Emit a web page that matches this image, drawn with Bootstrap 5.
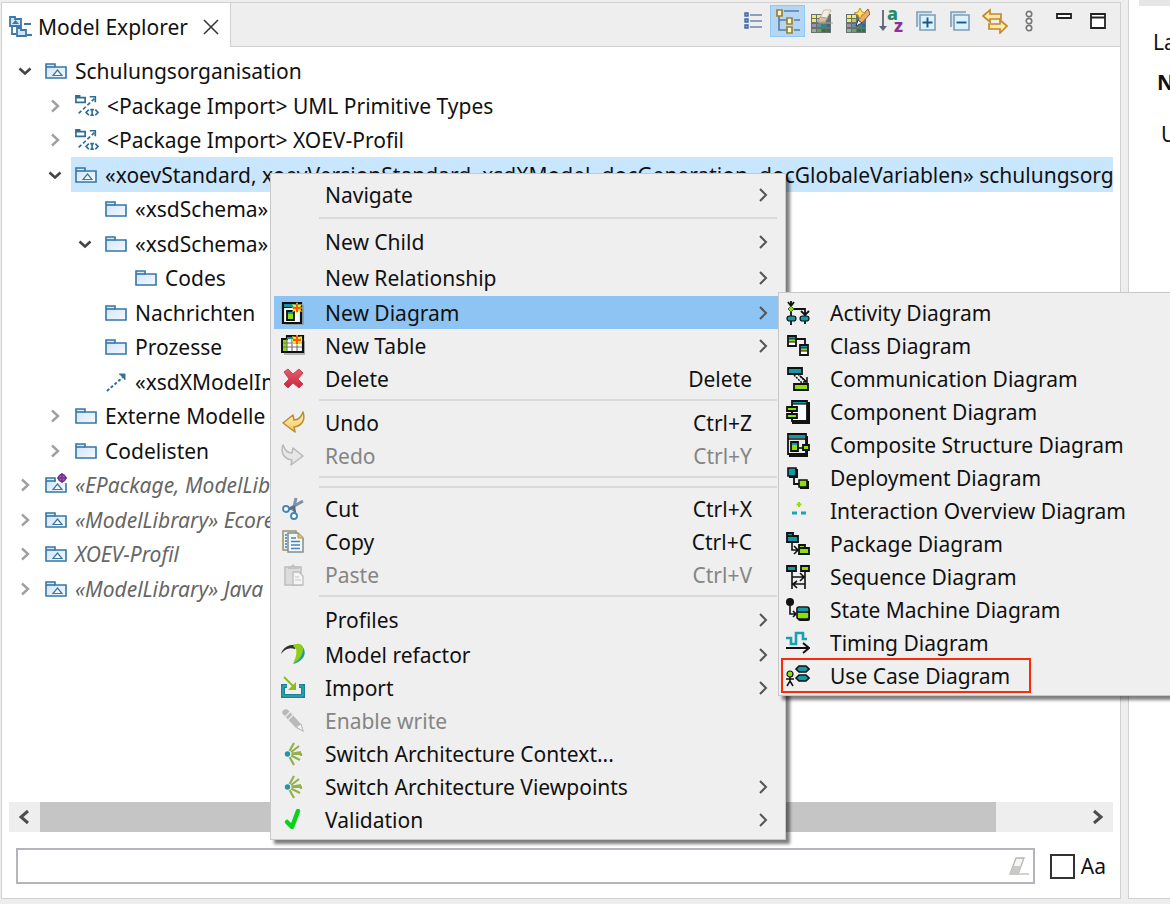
<!DOCTYPE html>
<html lang="en">
<head>
<meta charset="utf-8">
<meta name="viewport" content="width=device-width, initial-scale=1">
<title>Model Explorer</title>
<link href="https://cdn.jsdelivr.net/npm/bootstrap@5.3.0/dist/css/bootstrap.min.css" rel="stylesheet">
<style>
  body { background: #eee; color: #111; font-family: "Noto Sans", "Open Sans", sans-serif; font-size: 21px; line-height: 32px; }
  svg { display: block; flex: none; }
  .workbench { height: 100vh; min-height: 850px; padding: 2px 0 5px 1px; }
  .view-pane { background: #fff; border: 1px solid #d0d0d0; min-width: 0; }
  .side-pane { width: 42px; margin: -2px 0 0 7px; background: #fff; border: 1px solid #d0d0d0; border-width: 0 0 1px 1px; white-space: nowrap; }
  .side-strip { height: 6px; margin-left: 10px; background: #e6e6e6; }
  .view-head { height: 44px; background: #eee; }
  .view-tab { background: #fff; border-right: 1px solid #d0d0d0; padding: 3px 10px 0 6px; gap: 6px; }
  .view-tools { border-bottom: 1px solid #d0d0d0; padding: 2px 5px 0 0; }
  .tool { width: 34px; height: 32px; padding: 0; border: 1px solid transparent; border-radius: 0; background: none; }
  .tool:nth-child(even) { width: 35px; }
  .tool.active { background: #b5d6f2; border-color: #90c8f6; }
  .plain { border: 0; padding: 0; background: none; }
  .tree { margin: 7px 7px 0 13px; list-style: none; padding: 0; white-space: nowrap; }
  .tree li { height: 34px; }
  .tree li:nth-child(even) { height: 35px; }
  .twisty { width: 20px; flex: none; }
  .node { margin-left: 6px; padding-left: 4px; gap: 8px; }
  .node.picked { background: #c9e6ff; }
  .lv1 { padding-left: 30px; } .lv2 { padding-left: 60px; } .lv3 { padding-left: 90px; }
  .lib { color: #666; font-style: italic; }
  .hbar { margin: 0 7px 16px; height: 30px; background: #eee; }
  .hbar button { width: 31px; }
  .thumb { background: #c5c5c5; }
  .filter { margin: 0 14px 14px; gap: 15px; }
  .filter-box { height: 36px; border: 2px solid #b4b4bb; background: #fff; padding-right: 4px; }
  .filter-box input { border: 0; outline: 0; background: none; }
  .case-label { gap: 6px; }
  .case-label input { appearance: none; width: 25px; height: 25px; border: 2px solid #333; background: #fff; margin: 0; }
  .ctx { --bs-dropdown-bg: #efefef; --bs-dropdown-border-color: #c8c8c8; --bs-dropdown-border-radius: 0; --bs-dropdown-font-size: 21px;
    padding: 3px; color: #111; box-shadow: 4px 4px 3px rgba(0,0,0,.5); }
  .ctx-main { left: 270px; top: 173px; width: 516px; }
  .ctx-sub { left: calc(100% - 4px); top: -4px; width: 420px; z-index: 1; }
  .ctx .dropdown-item { display: flex; align-items: center; gap: 20px; height: 33px; padding: 0 14px 0 7px; color: #111; }
  .ctx .dropdown-item.tall { height: 36px; }
  .ctx .dropdown-item.off { color: #858585; }
  .ctx .dropdown-item.on { background: #8dc4f3; width: calc(100% - 3px); padding-right: 11px; }
  .ctx .ctx-sub .dropdown-item { padding-left: 4px; }
  .ctx .dropdown-item.marked { width: 248px; outline: 2px solid #fb2a0a; outline-offset: -1px; }
  .ico { width: 24px; height: 24px; flex: none; }
  .keys { margin: 0 16px 0 auto; }
  .more { margin-left: auto; }
  .rule { height: 11px; margin: 0 5px 0 45px; padding-top: 4px; }
  .rule::before { content: ""; display: block; border-top: 2px solid #dadada; }
  .rule + .rule { height: 9px; padding-top: 3px; }
</style>
</head>
<body class="overflow-hidden">

<svg width="0" height="0" class="position-absolute" aria-hidden="true">
  <defs>
    <linearGradient id="blue" x2="1" y2="1"><stop stop-color="#cfe3f8"/><stop offset="1" stop-color="#f4f9ff"/></linearGradient>
    <linearGradient id="gold" x2="0" y2="1"><stop stop-color="#fff3c8"/><stop offset="1" stop-color="#f3c75b"/></linearGradient>
    <linearGradient id="red" x2="0" y2="1"><stop stop-color="#e0606c"/><stop offset="1" stop-color="#cf2440"/></linearGradient>
    <symbol id="folder" viewBox="0 0 22 16"><path d="M1 15V1h9v3h11v11z" fill="url(#blue)" stroke="#3577a5" stroke-width="1.6"/><path d="M1 4h9" stroke="#3577a5" stroke-width="1.6"/></symbol>
    <symbol id="model" viewBox="0 0 22 16"><use href="#folder"/><path d="M8 12.500 12.500 7l4.500 5.500z" fill="#fff" stroke="#3577a5" stroke-width="1.200"/></symbol>
    <symbol id="import-pkg" viewBox="0 0 26 24"><g fill="none" stroke="#2d6d98" stroke-width="1.800"><path d="M1 8V1h4v2h6v5zM1 3h5"/><path d="M4 20 21 4" stroke-dasharray="4 2.500"/><path d="M16 2h6v6M15 16l-3 3 3 3M22 16l3 3-3 3M16.500 16h4M16.500 22h4M18.500 16v6"/></g></symbol>
    <symbol id="dash" viewBox="0 0 22 20"><path d="M2 19 18 5" stroke="#34729a" stroke-width="2" stroke-dasharray="3 2"/><path d="M14 2h6v6" fill="#34729a" stroke="#34729a"/></symbol>
    <symbol id="open" viewBox="0 0 20 20"><path d="m4.500 7.500 5.500 5 5.500-5" fill="none" stroke="#444" stroke-width="2.600"/></symbol>
    <symbol id="shut" viewBox="0 0 20 20"><path d="m7 4.500 6 5.500-6 5.500" fill="none" stroke="#a0a0a0" stroke-width="2.400"/></symbol>
    <symbol id="chev" viewBox="0 0 10 14"><path d="m2 1 6 6-6 6" fill="none" stroke="#555" stroke-width="2"/></symbol>
    <symbol id="spark" viewBox="0 0 12 12"><path d="m6 0 1.500 3L11 2 9.500 5l2.500 1-2.500 1L11 10 7.500 9 6 12 4.500 9 1 10l1.500-3L0 6l2.500-1L1 2l3.500 1z" fill="#ffe11a"/><path d="M6 2v8M2 6h8" stroke="#f05a14" stroke-width="2"/></symbol>
    <symbol id="fan" viewBox="0 0 24 24"><path d="M8 10 13 1M9 11l9-7M9 12l11-2M9 12h11v2M9 13l10 5M8 14l5 9" fill="none" stroke="#93b04e" stroke-width="2.200"/><circle cx="7" cy="12" r="3.600" fill="#efefef"/><circle cx="6.500" cy="12" r="2.700" fill="#2295a8"/></symbol>
    <symbol id="palette" viewBox="0 0 26 26"><path d="M2 6h20v19H2z" fill="#66726d"/><path d="M3 7h4v3H3zM3 11h4v3H3zM8 7h4v3H8z" fill="#f1eb69"/><path d="M8 11h4v3H8z" fill="#bbcd62"/><path d="M3 16h4v3H3z" fill="#9f91ac"/><path d="M3 21h4v3H3z" fill="#9cab9d"/><path d="M8 16h4v3H8z" fill="#658fa3"/><path d="M13 16h4v3h-4z" fill="#32877e"/><path d="M18 16h3v3h-3z" fill="#236da1"/><path d="M8 21h4v3H8z" fill="#67a65a"/><path d="M13 21h4v3h-4zM18 21h3v3h-3z" fill="#247b3d"/></symbol>
  </defs>
</svg>

<main class="workbench d-flex position-relative">
  <section class="view-pane flex-grow-1 d-flex flex-column" aria-label="Model Explorer">
    <header class="view-head d-flex">
      <div class="view-tab d-flex align-items-center">
        <svg width="24" height="22" viewBox="0 0 24 22" fill="none" stroke="#3e78a8" stroke-width="1.800"><path d="M2 10V1h5v2h6v7z" fill="#cfe4f6"/><path d="m4 8 3.500-4L11 8z" fill="#3e78a8" stroke="none"/><path d="M4 10v8h4M16 8h7M19 19h5" /><path d="M9 20v-8h4v2h5v6z" fill="#cfe4f6"/></svg>
        <span>Model Explorer</span>
        <button class="plain ms-2" type="button" aria-label="Close"><svg width="18" height="18" viewBox="0 0 18 18"><path d="m2 2 14 14M16 2 2 16" stroke="#333" stroke-width="1.500"/></svg></button>
      </div>
      <div class="view-tools d-flex flex-grow-1 justify-content-end">
        <button class="tool d-flex align-items-center justify-content-center" type="button" aria-label="List"><svg width="18" height="18" viewBox="0 0 18 18"><path d="M6 3h12M6 9h12M6 15h12" stroke="#6b86a9" stroke-width="1.600"/><path d="M1 1h3v3H1zM1 7h3v3H1zM1 13h3v3H1z" fill="#8bb0d9" stroke="#4166a0" stroke-width="1.400"/></svg></button>
        <button class="tool active d-flex align-items-center justify-content-center" type="button" aria-label="Tree"><svg width="26" height="26" viewBox="0 0 26 26"><path d="M9 3h15M19 12h6M19 22h6M4 8v14h8M4 12h8" fill="none" stroke="#557ba5" stroke-width="1.600"/><path d="M2 2h5v6H2zM12 10h5v6h-5zM12 19h5v6h-5z" fill="#fff8cb" stroke="#92823b" stroke-width="1.700"/></svg></button>
        <button class="tool d-flex align-items-center justify-content-center" type="button" aria-label="Erase colours"><svg width="26" height="26" viewBox="0 0 26 26"><use href="#palette"/><path d="m9 14 6-12h7l-6 12z" fill="#f3eee6" stroke="#c9b9aa"/><path d="M9 14h7l2-4-7-1zM10 15h14" fill="#d3bea9" stroke="#b4a18e"/></svg></button>
        <button class="tool d-flex align-items-center justify-content-center" type="button" aria-label="Edit colours"><svg width="26" height="26" viewBox="0 0 26 26"><use href="#palette"/><path d="m12 18 2-6L24 1l2 5-9 10z" fill="#e7ad73" stroke="#8f542a"/><path d="m12 18 2-6 4 3z" fill="#fff" stroke="#233e76"/><path d="m16 0 2 4 4 1-4 2-2 4-2-4-4-2 4-1z" fill="#ffe369" stroke="#c89422"/></svg></button>
        <button class="tool d-flex align-items-center justify-content-center" type="button" aria-label="Sort"><svg width="26" height="26" viewBox="0 0 26 26"><path d="M5 2v17" stroke="#586778" stroke-width="1.800"/><path d="M1 18h8l-4 5z" fill="#586778"/><text x="9" y="12" font-family="Noto Sans, sans-serif" font-weight="800" font-size="18" fill="#278a68">a</text><text x="16" y="24" font-family="Noto Sans, sans-serif" font-weight="800" font-size="18" fill="#8a3296">z</text></svg></button>
        <button class="tool d-flex align-items-center justify-content-center" type="button" aria-label="Expand all"><svg width="20" height="20" viewBox="0 0 20 20"><path d="M1 16V1h15" fill="#d4e5ef" stroke="#7d9db7" stroke-width="1.600"/><path d="M4 4h15v15H4z" fill="#ddf1fb" stroke="#7d9db7" stroke-width="1.600"/><path d="M6.500 11.500h10M11.500 6.500v10" stroke="#155a8c" stroke-width="1.900"/></svg></button>
        <button class="tool d-flex align-items-center justify-content-center" type="button" aria-label="Collapse all"><svg width="20" height="20" viewBox="0 0 20 20"><path d="M1 16V1h15" fill="#d4e5ef" stroke="#7d9db7" stroke-width="1.600"/><path d="M4 4h15v15H4z" fill="#ddf1fb" stroke="#7d9db7" stroke-width="1.600"/><path d="M6.500 11.500h10" stroke="#155a8c" stroke-width="1.900"/></svg></button>
        <button class="tool d-flex align-items-center justify-content-center" type="button" aria-label="Link with editor"><svg width="26" height="26" viewBox="0 0 26 26" fill="#ffeaa8" stroke="#c4882c" stroke-width="1.700"><path d="m1 8 7-6v4h11v5H8v3z"/><path d="m25 18-7-6v4H7v5h11v4z"/></svg></button>
        <button class="tool d-flex align-items-center justify-content-center" type="button" aria-label="View menu"><svg width="10" height="24" viewBox="0 0 10 24" fill="#fff" stroke="#777" stroke-width="1.700"><circle cx="5" cy="5" r="2.700"/><circle cx="5" cy="12" r="2.700"/><circle cx="5" cy="19" r="2.700"/></svg></button>
        <button class="tool d-flex align-items-center justify-content-center" type="button" aria-label="Minimize"><svg width="16" height="16" viewBox="0 0 16 16"><path d="M1 1h14v4H1z" fill="#fff" stroke="#222" stroke-width="1.800"/></svg></button>
        <button class="tool d-flex align-items-center justify-content-center" type="button" aria-label="Maximize"><svg width="16" height="16" viewBox="0 0 16 16"><path d="M1 1h14v14H1zM1 4.500h14" fill="#fff" stroke="#222" stroke-width="1.800"/></svg></button>
      </div>
    </header>

    <ul class="tree flex-grow-1 overflow-hidden">
      <li class="d-flex align-items-center"><svg class="twisty" height="20"><use href="#open"/></svg><div class="node d-flex align-items-center flex-grow-1"><svg width="22" height="16"><use href="#model"/></svg>Schulungsorganisation</div></li>
      <li class="d-flex align-items-center lv1"><svg class="twisty" height="20"><use href="#shut"/></svg><div class="node d-flex align-items-center flex-grow-1"><svg width="24" height="24"><use href="#import-pkg"/></svg>&lt;Package Import&gt; UML Primitive Types</div></li>
      <li class="d-flex align-items-center lv1"><svg class="twisty" height="20"><use href="#shut"/></svg><div class="node d-flex align-items-center flex-grow-1"><svg width="24" height="24"><use href="#import-pkg"/></svg>&lt;Package Import&gt; XOEV-Profil</div></li>
      <li class="d-flex lv1"><svg class="twisty align-self-center" height="20"><use href="#open"/></svg><div class="node picked d-flex align-items-center flex-grow-1"><svg width="22" height="16"><use href="#model"/></svg>«xoevStandard, xoevVersionStandard, xsdXModel, docGeneration, docGlobaleVariablen» schulungsorganisation</div></li>
      <li class="d-flex align-items-center lv2"><span class="twisty"></span><div class="node d-flex align-items-center flex-grow-1"><svg width="22" height="16"><use href="#folder"/></svg>«xsdSchema»</div></li>
      <li class="d-flex align-items-center lv2"><svg class="twisty" height="20"><use href="#open"/></svg><div class="node d-flex align-items-center flex-grow-1"><svg width="22" height="16"><use href="#folder"/></svg>«xsdSchema»</div></li>
      <li class="d-flex align-items-center lv3"><span class="twisty"></span><div class="node d-flex align-items-center flex-grow-1"><svg width="22" height="16"><use href="#folder"/></svg>Codes</div></li>
      <li class="d-flex align-items-center lv2"><span class="twisty"></span><div class="node d-flex align-items-center flex-grow-1"><svg width="22" height="16"><use href="#folder"/></svg>Nachrichten</div></li>
      <li class="d-flex align-items-center lv2"><span class="twisty"></span><div class="node d-flex align-items-center flex-grow-1"><svg width="22" height="16"><use href="#folder"/></svg>Prozesse</div></li>
      <li class="d-flex align-items-center lv2"><span class="twisty"></span><div class="node d-flex align-items-center flex-grow-1"><svg width="22" height="20"><use href="#dash"/></svg>«xsdXModelImport»</div></li>
      <li class="d-flex align-items-center lv1"><svg class="twisty" height="20"><use href="#shut"/></svg><div class="node d-flex align-items-center flex-grow-1"><svg width="22" height="16"><use href="#folder"/></svg>Externe Modelle</div></li>
      <li class="d-flex align-items-center lv1"><svg class="twisty" height="20"><use href="#shut"/></svg><div class="node d-flex align-items-center flex-grow-1"><svg width="22" height="16"><use href="#folder"/></svg>Codelisten</div></li>
      <li class="d-flex align-items-center"><svg class="twisty" height="20"><use href="#shut"/></svg><div class="node lib d-flex align-items-center flex-grow-1"><svg width="22" height="24" viewBox="0 0 22 24"><use href="#model" y="4" width="22" height="16"/><path d="M11 0h11v10H11z" fill="#fff"/><circle cx="17" cy="5" r="3.500" fill="#a868b0" stroke="#70308a" stroke-width="1.500"/><path d="M17 0v10M12 5h10" stroke="#70308a" stroke-width="1.500"/></svg>«EPackage, ModelLibrary»</div></li>
      <li class="d-flex align-items-center"><svg class="twisty" height="20"><use href="#shut"/></svg><div class="node lib d-flex align-items-center flex-grow-1"><svg width="22" height="16"><use href="#model"/></svg>«ModelLibrary» Ecore</div></li>
      <li class="d-flex align-items-center"><svg class="twisty" height="20"><use href="#shut"/></svg><div class="node lib d-flex align-items-center flex-grow-1"><svg width="22" height="16"><use href="#model"/></svg>XOEV-Profil</div></li>
      <li class="d-flex align-items-center"><svg class="twisty" height="20"><use href="#shut"/></svg><div class="node lib d-flex align-items-center flex-grow-1"><svg width="22" height="16"><use href="#model"/></svg>«ModelLibrary» Java</div></li>
    </ul>

    <div class="hbar d-flex">
      <button class="plain d-flex flex-shrink-0 align-items-center justify-content-center" type="button" aria-label="Scroll left"><svg width="12" height="16" viewBox="0 0 12 16"><path d="M9 2 2 8l7 6" fill="none" stroke="#4d4d4d" stroke-width="3"/></svg></button>
      <div class="flex-grow-1 d-flex"><div class="thumb" style="width:91.7%"></div></div>
      <button class="plain d-flex flex-shrink-0 align-items-center justify-content-center" type="button" aria-label="Scroll right"><svg width="12" height="16" viewBox="0 0 12 16"><path d="m2 2 7 6-7 6" fill="none" stroke="#4d4d4d" stroke-width="3"/></svg></button>
    </div>

    <div class="filter d-flex align-items-center">
      <div class="filter-box d-flex align-items-center flex-grow-1">
        <input type="text" class="flex-grow-1" aria-label="Filter">
        <button class="plain" type="button" aria-label="Clear"><svg width="20" height="20" viewBox="0 0 20 20"><path d="m1 18 6-16h8L9 18z" fill="#f6f6f4" stroke="#b5b5b0" stroke-width="1.300"/><path d="m1 18 3-8h8L9 18z" fill="#c9c9c5"/><path d="M9 18h11" stroke="#c5c5c0" stroke-width="1.500"/></svg></button>
      </div>
      <label class="case-label d-flex align-items-center"><input type="checkbox">Aa</label>
    </div>
  </section>

  <section class="side-pane overflow-hidden flex-shrink-0" aria-label="Properties">
    <div class="side-strip"></div>
    <div class="mt-3 ps-4 pt-1">Label</div>
    <div class="mt-2 fw-bold ms-1 ps-4">Name</div>
    <div class="mt-3 pt-1 ms-2 ps-4">URI</div>
  </section>

  <ul class="dropdown-menu show ctx ctx-main">
    <li><button class="dropdown-item tall" type="button"><span class="ico"></span>Navigate<svg class="more" width="10" height="14"><use href="#chev"/></svg></button></li>
    <li class="rule"></li>
    <li><button class="dropdown-item tall" type="button"><span class="ico"></span>New Child<svg class="more" width="10" height="14"><use href="#chev"/></svg></button></li>
    <li><button class="dropdown-item tall" type="button"><span class="ico"></span>New Relationship<svg class="more" width="10" height="14"><use href="#chev"/></svg></button></li>
    <li class="position-relative">
      <button class="dropdown-item on" type="button"><svg class="ico" viewBox="0 0 24 24"><path d="M5 4h18v20H5z" fill="#8a8a80" opacity=".6"/><path d="M2 2h18v20H2z" fill="#fff" stroke="#111" stroke-width="2.200"/><path d="M3 3h16v3H3z" fill="#16929f"/><path d="M3 6.500h16" stroke="#111"/><path d="M6 10h7v9H6z" fill="#8fdd0a" stroke="#111" stroke-width="1.800"/><path d="M7 11h5v2H7z" fill="#16929f"/><use href="#spark" x="10" y="1" width="12" height="12"/></svg>New Diagram<svg class="more" width="10" height="14"><use href="#chev"/></svg></button>
      <ul class="dropdown-menu show ctx ctx-sub">
        <li><button class="dropdown-item" type="button"><svg class="ico" viewBox="0 0 24 24"><g fill="none" stroke="#111" stroke-width="1.800"><path d="M5 0v24M2 1l3 4 3-4M5 8h14v15M15 10l4 4 4-4"/></g><path d="m5 5 3 3-3 3-3-3z" fill="#8fdd0a" stroke="#456b08"/><rect x="1" y="15" width="9" height="5" rx="2.500" fill="#129aa8" stroke="#111" stroke-width="1.200"/><rect x="14" y="15" width="9" height="5" rx="2.500" fill="#129aa8" stroke="#111" stroke-width="1.200"/></svg>Activity Diagram</button></li>
        <li><button class="dropdown-item" type="button"><svg class="ico" viewBox="0 0 24 24"><path d="M10 5h9v6" fill="none" stroke="#111" stroke-width="1.800"/><path d="M2 2h8v10H2zM14 11h8v10h-8z" fill="#fff" stroke="#111" stroke-width="1.800"/><path d="M3 3h6v2H3zM15 12h6v2h-6z" fill="#129aa8"/><path d="M3 5.500h6V8H3zM15 14.500h6V17h-6z" fill="#8fdd0a"/><path d="M2 5h8M2 8h8M14 14h8M14 17h8" stroke="#111"/></svg>Class Diagram</button></li>
        <li><button class="dropdown-item" type="button"><svg class="ico" viewBox="0 0 24 24"><path d="M2 1h14v6H2z" fill="#129aa8" stroke="#111" stroke-width="1.800"/><path d="m8 8 8 8M12 7l8 8" stroke="#111" stroke-width="1.500" stroke-dasharray="2 1"/><path d="m14 9 7 6v-5M21 15h-4" fill="none" stroke="#111" stroke-width="1.500"/><path d="M8 17h14v6H8z" fill="#8fdd0a" stroke="#111" stroke-width="1.800"/></svg>Communication Diagram</button></li>
        <li><button class="dropdown-item" type="button"><svg class="ico" viewBox="0 0 24 24"><path d="M6 2h18v22H6z" fill="#111"/><path d="M6 1h15v20H6z" fill="#fff" stroke="#111" stroke-width="1.800"/><path d="M7 2h13v2H7z" fill="#129aa8"/><path d="M6 4h15" stroke="#111" stroke-width="1.200"/><path d="M1 7h10v4H1zM1 14h10v4H1z" fill="#8fdd0a" stroke="#111" stroke-width="1.800"/></svg>Component Diagram</button></li>
        <li><button class="dropdown-item" type="button"><svg class="ico" viewBox="0 0 24 24"><path d="M3 3h19v21H3z" fill="#111"/><path d="M2 1h18v20H2z" fill="#e9ece9" stroke="#111" stroke-width="1.800"/><path d="M3 2h16v3H3z" fill="#129aa8"/><path d="M2 6h18" stroke="#111" stroke-width="1.500"/><path d="M5 9h7v9H5zM17 12h6v5h-6z" fill="#8fdd0a" stroke="#111" stroke-width="1.800"/><path d="M12 15h5" stroke="#111" stroke-width="1.600"/><path d="M6 10h5v2H6z" fill="#129aa8"/></svg>Composite Structure Diagram</button></li>
        <li><button class="dropdown-item" type="button"><svg class="ico" viewBox="0 0 24 24"><path d="M3 3h9v9H3zM14 15h9v8h-9z" fill="#111"/><path d="M2 2h8v8H2z" fill="#129aa8" stroke="#111" stroke-width="1.600"/><path d="M8 11v7h6" fill="none" stroke="#111" stroke-width="1.800"/><path d="M13 14h8v7h-8z" fill="#8fdd0a" stroke="#111" stroke-width="1.600"/></svg>Deployment Diagram</button></li>
        <li><button class="dropdown-item" type="button"><svg class="ico" viewBox="0 0 24 24"><path d="M13 3v5M10.500 5.500h5" stroke="#8fdd0a" stroke-width="2"/><path d="M6 14h5M15 14h5" stroke="#17a7b2" stroke-width="3"/></svg>Interaction Overview Diagram</button></li>
        <li><button class="dropdown-item" type="button"><svg class="ico" viewBox="0 0 24 24"><path d="M1 10V1h6v3h5v6zM1 4h6" fill="#129aa8" stroke="#111" stroke-width="1.800"/><path d="M6 11v7h6M8 14l4 4-4 4" fill="none" stroke="#111" stroke-width="1.600"/><path d="M13 22v-9h6v3h4v6zM13 16h6" fill="#8fdd0a" stroke="#111" stroke-width="1.800"/></svg>Package Diagram</button></li>
        <li><button class="dropdown-item" type="button"><svg class="ico" viewBox="0 0 24 24"><path d="M6 5v19M19 5v19M6 12h12M14 8l4 4-4 4M19 19H7M11 16l-4 3 4 4" fill="none" stroke="#111" stroke-width="1.600"/><path d="M1 1h9v5H1z" fill="#129aa8" stroke="#111" stroke-width="1.800"/><path d="M15 1h8v5h-8z" fill="#8fdd0a" stroke="#111" stroke-width="1.800"/></svg>Sequence Diagram</button></li>
        <li><button class="dropdown-item" type="button"><svg class="ico" viewBox="0 0 24 24"><circle cx="4" cy="4" r="4" fill="#111"/><path d="M4 6v10h6M7 13l3 3-3 3" fill="none" stroke="#111" stroke-width="1.600"/><rect x="12" y="10" width="12" height="13" rx="2" fill="#111"/><rect x="11" y="9" width="12" height="12" rx="2" fill="#8fdd0a" stroke="#111" stroke-width="1.600"/><path d="M12 10h10v3H12z" fill="#129aa8"/><path d="M11 14h12" stroke="#111" stroke-width="1.600"/></svg>State Machine Diagram</button></li>
        <li><button class="dropdown-item" type="button"><svg class="ico" viewBox="0 0 24 24"><path d="M0 7h5v6h5V2h7v6h4" fill="none" stroke="#17a2ae" stroke-width="2.600"/><path d="M0 17h23M17 12l6 5-6 5" fill="none" stroke="#111" stroke-width="1.900"/></svg>Timing Diagram</button></li>
        <li><button class="dropdown-item marked" type="button"><svg class="ico" viewBox="0 0 24 24"><path d="m10 5 3-3h7l3 3-3 3h-7zM10 14l3-3h7l3 3-3 3h-7z" fill="#129aa8" stroke="#111" stroke-width="1.600"/><circle cx="4" cy="10" r="3" fill="#8fdd0a" stroke="#111" stroke-width="1.200"/><path d="M4 13v5M0 15h8M4 17l-3 5M4 17l3 5" stroke="#111" stroke-width="1.500"/></svg>Use Case Diagram</button></li>
      </ul>
    </li>
    <li><button class="dropdown-item" type="button"><svg class="ico" viewBox="0 0 24 24"><path d="M3 7h21v14H3z" fill="#888" opacity=".6"/><path d="M1 5h5V2h16v16H1z" fill="#fff" stroke="#111" stroke-width="2.200"/><path d="M2 6h4v11H2z" fill="#8fdd0a"/><path d="M6 3h14v2H6z" fill="#16929f"/><path d="M6 5v12M11 5v12M16 5v12M2 9h19M2 13h19" stroke="#777" stroke-width="1.200"/><use href="#spark" x="10" y="0" width="12" height="12"/></svg>New Table<svg class="more" width="10" height="14"><use href="#chev"/></svg></button></li>
    <li><button class="dropdown-item" type="button"><svg class="ico" viewBox="0 0 24 24"><path d="m3 5 4-3 5 5 6-5 4 4-5 6 5 5-4 4-6-5-5 5-4-4 5-5z" fill="url(#red)" stroke="#d04355" stroke-linejoin="round"/></svg>Delete<span class="keys">Delete</span></button></li>
    <li class="rule"></li>
    <li><button class="dropdown-item" type="button"><svg class="ico" viewBox="0 0 24 24"><path d="M22 1c3 9-2 14-9 15l1 5L2 12l10-8 1 5c4 0 7-2 9-8z" fill="url(#gold)" stroke="#bd8b2e" stroke-width="1.500" stroke-linejoin="round"/></svg>Undo<span class="keys">Ctrl+Z</span></button></li>
    <li><button class="dropdown-item off" type="button"><svg class="ico" viewBox="0 0 24 24"><path d="M2 1c-3 9 2 14 9 15l-1 5 12-9-10-8-1 5C7 9 4 7 2 1z" fill="#e6e6e6" stroke="#b9b9b9" stroke-width="1.500" stroke-linejoin="round"/></svg>Redo<span class="keys">Ctrl+Y</span></button></li>
    <li class="rule"></li>
    <li class="rule"></li>
    <li><button class="dropdown-item" type="button"><svg class="ico" viewBox="0 0 24 24"><path d="m8 12 14-8M12 14l3-13" stroke="#7f91a6" stroke-width="3"/><path d="m8 12 5-2 1 6" fill="none" stroke="#596b82" stroke-width="2.400"/><circle cx="5" cy="12" r="3" fill="#fff" stroke="#4586b8" stroke-width="1.900"/><circle cx="13" cy="19" r="3" fill="#fff" stroke="#4586b8" stroke-width="1.900"/></svg>Cut<span class="keys">Ctrl+X</span></button></li>
    <li><button class="dropdown-item" type="button"><svg class="ico" viewBox="0 0 24 24"><path d="M2 1h13v19H2z" fill="#e9eff0" stroke="#9b936a" stroke-width="1.500"/><path d="M4 5h2M4 8h2M4 11h2M4 14h2M4 17h2" stroke="#457cab" stroke-width="1.500"/><path d="M7 3h10l5 5v14H7z" fill="#f2f8fc" stroke="#7f8e91" stroke-width="1.500"/><path d="M17 3v5h5" fill="#ecc55a" stroke="#b9943a"/><path d="M10 8h5M10 11.500h9M10 15h9M10 18.500h9" stroke="#4d83b3" stroke-width="1.500"/></svg>Copy<span class="keys">Ctrl+C</span></button></li>
    <li><button class="dropdown-item off" type="button"><svg class="ico" viewBox="0 0 24 24"><path d="M4 4h16v18H4z" fill="#dcdcdc" stroke="#bdbdbd" stroke-width="1.500"/><path d="M7 6V3h3l2-2 2 2h4v3z" fill="#c3c3c3"/><path d="M12 9h6l4 4v9H12z" fill="#f4f4f4" stroke="#bdbdbd" stroke-width="1.300"/><path d="M14 14h4M14 17h6" stroke="#c7c7c7"/></svg>Paste<span class="keys">Ctrl+V</span></button></li>
    <li class="rule"></li>
    <li><button class="dropdown-item tall" type="button"><span class="ico"></span>Profiles<svg class="more" width="10" height="14"><use href="#chev"/></svg></button></li>
    <li><button class="dropdown-item" type="button"><svg class="ico" viewBox="0 0 24 24"><path d="M0 11C2 4 9 1 16 2l-2 4C8 4 4 6 0 11z" fill="#303030"/><path d="M20 2c7 6 4 16-8 19 5-5 8-11 8-19z" fill="#2398ad"/><path d="M12 3c3-4 11-3 10 4-1 6-4 11-10 13 3-5 4-10 3-14z" fill="#8fcf16"/></svg>Model refactor<svg class="more" width="10" height="14"><use href="#chev"/></svg></button></li>
    <li><button class="dropdown-item" type="button"><svg class="ico" viewBox="0 0 24 24"><path d="M6 10H2v10h20V10h-4" fill="none" stroke="#178397" stroke-width="4"/><path d="M6 10H2v10h20V10h-4" fill="none" stroke="#45b0bf"/><path d="m3 1 10 10" stroke="#8dbb24" stroke-width="2"/><path d="M15 6v8H7z" fill="#8dbb24"/></svg>Import<svg class="more" width="10" height="14"><use href="#chev"/></svg></button></li>
    <li><button class="dropdown-item off" type="button"><svg class="ico" viewBox="0 0 24 24"><path d="M1 4c0-3 4-5 6-3l13 14 3 8-8-4z" fill="#b9b9b9"/><path d="m15 18 5-3 2 7z" fill="#f4f4f4" stroke="#bbb"/><path d="m4 8 5-5M7 11l5-5" stroke="#e8e8e8" stroke-width="1.500"/></svg>Enable write</button></li>
    <li><button class="dropdown-item" type="button"><svg class="ico"><use href="#fan"/></svg>Switch Architecture Context...</button></li>
    <li><button class="dropdown-item" type="button"><svg class="ico"><use href="#fan"/></svg>Switch Architecture Viewpoints<svg class="more" width="10" height="14"><use href="#chev"/></svg></button></li>
    <li><button class="dropdown-item" type="button"><svg class="ico" viewBox="0 0 24 24"><path d="m6 14 5 5 6-16" fill="none" stroke="#0bd11b" stroke-width="4.500" stroke-linecap="round" stroke-linejoin="round"/></svg>Validation<svg class="more" width="10" height="14"><use href="#chev"/></svg></button></li>
  </ul>
</main>
<script src="https://cdn.jsdelivr.net/npm/bootstrap@5.3.0/dist/js/bootstrap.bundle.min.js"></script>
</body>
</html>
